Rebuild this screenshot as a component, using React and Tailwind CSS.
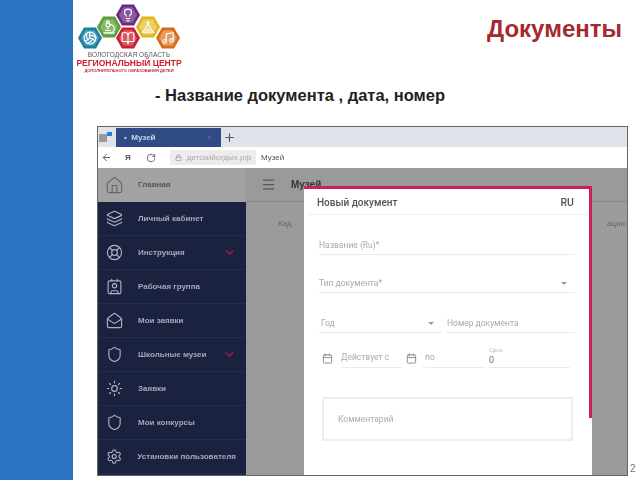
import React from 'react';
import { House, Layers, LifeBuoy, Contact, MailOpen, Shield, Sun, Settings, Calendar, ChevronDown, RotateCw, Lock, Plus, X, ArrowLeft, Menu, Volleyball, Microscope, Lightbulb, BookOpen, Tent, Music, Pencil } from 'lucide-react';

const hexes = [
  { cx: 20, cy: 27, fill: '#1f7f9c', I: Volleyball, inner: '#4aa3bf' },
  { cx: 39, cy: 16, fill: '#5f9e3c', I: Microscope, inner: '#86b867' },
  { cx: 58, cy: 12, fill: '#6a2c82', I: Lightbulb, inner: '#8c5aa0' },
  { cx: 58, cy: 27, fill: '#c8202e', I: BookOpen, inner: '#d95a60' },
  { cx: 78, cy: 16, fill: '#e0b81e', I: Tent, inner: '#ecd066' },
  { cx: 98, cy: 27, fill: '#d96a1c', I: Music, inner: '#e79a60' },
];

function hexPoints(cx, cy, r) {
  const h = r * 0.866;
  return `${cx - r},${cy} ${cx - r / 2},${cy - h} ${cx + r / 2},${cy - h} ${cx + r},${cy} ${cx + r / 2},${cy + h} ${cx - r / 2},${cy + h}`;
}

function LogoHexes() {
  const pos = [
    { cx: 12, cy: 34 }, { cx: 31, cy: 23 }, { cx: 50, cy: 11 },
    { cx: 50, cy: 34 }, { cx: 70, cy: 23 }, { cx: 90, cy: 34 },
  ];
  return (
    <svg width="102" height="46" viewBox="0 0 102 46" className="block">
      {hexes.map((h, i) => {
        const { cx, cy } = pos[i];
        const I = h.I;
        return (
          <g key={i}>
            <polygon points={hexPoints(cx, cy, 12)} fill={h.fill} />
            <polygon points={hexPoints(cx, cy, 9)} fill={h.inner} />
            <I x={cx - 7} y={cy - 7} width={14} height={14} color="#ffffff" strokeWidth={2} />
          </g>
        );
      })}
    </svg>
  );
}

const items = [
  { t: 'Личный кабинет', I: Layers },
  { t: 'Инструкция', I: LifeBuoy, c: true },
  { t: 'Рабочая группа', I: Contact },
  { t: 'Мои заявки', I: MailOpen },
  { t: 'Школьные музеи', I: Shield, c: true },
  { t: 'Заявки', I: Sun },
  { t: 'Мои конкурсы', I: Shield },
  { t: 'Установки пользователя', I: Settings },
];

function Field({ label, className = '', arrow = false }) {
  return (
    <div className={`flex items-center justify-between border-b border-[#ececec] text-[8.5px] text-[#a9a9a9] ${className}`}>
      <span>{label}</span>
      {arrow && <span className="mr-2 h-0 w-0 border-x-[3px] border-t-[3px] border-x-transparent border-t-[#999]" />}
    </div>
  );
}

export default function App() {
  return (
    <div className="flex h-[480px] w-[640px] overflow-hidden bg-white font-['Liberation_Sans',sans-serif]">
      <div className="h-full w-[73px] shrink-0 bg-[#2b74c1]" />
      <div className="flex min-w-0 flex-1 flex-col">
        <div className="flex h-[76px] items-start justify-between pr-[18px]">
          <div className="ml-[5px] mt-[4px] flex w-[102px] flex-col items-center blur-[0.4px]">
            <LogoHexes />
            <div className="mt-[1px] whitespace-nowrap text-[6.5px] leading-[7px] tracking-[0.1px] text-[#555]">ВОЛОГОДСКАЯ ОБЛАСТЬ</div>
            <div className="whitespace-nowrap text-[8.5px] font-bold leading-[10px] text-[#d2202f]">РЕГИОНАЛЬНЫЙ ЦЕНТР</div>
            <div className="whitespace-nowrap text-[4px] font-bold leading-[6px] text-[#c0303a]">ДОПОЛНИТЕЛЬНОГО ОБРАЗОВАНИЯ ДЕТЕЙ</div>
          </div>
          <h1 className="mt-[14px] text-[24px] font-bold leading-[30px] text-[#a52a2e]">Документы</h1>
        </div>
        <div className="ml-[82px] mt-[9px] h-[41px] text-[16.5px] font-bold leading-[20px] text-[#222]">- Название документа , дата, номер</div>
        <div className="flex min-h-0 items-end">
          <div className="ml-[24px] flex h-[350px] w-[531px] shrink-0 flex-col overflow-hidden border-[1.5px] border-[#666] blur-[0.5px]">
            <div className="flex h-[20px] shrink-0 items-end bg-[#dfe3ea] pl-[1px]">
              <div className="flex h-[19px] w-[17px] items-center"><div className="h-[8px] w-[8px] bg-[#999]" /><div className="h-[4px] w-[5px] self-start mt-[4px] bg-[#2a7de1]" /></div>
              <div className="flex h-[19px] w-[105px] items-center justify-between bg-[#2f4a85] px-[8px] text-[8px] font-bold text-[#cfd6e8]">
                <span>•&nbsp;&nbsp;Музей</span>
                <X size={7} color="#7d8cb0" />
              </div>
              <Plus size={13} color="#555" className="mb-[3px] ml-[2px]" />
            </div>
            <div className="flex h-[21px] shrink-0 items-center bg-white pl-[3px] text-[8px] text-[#555]">
              <ArrowLeft size={11} color="#555" />
              <span className="ml-[13px] font-bold">Я</span>
              <RotateCw size={10} color="#555" className="ml-[15px]" />
              <div className="ml-[14px] flex h-[15px] items-center gap-[5px] bg-[#ececec] px-[5px] text-[#aaa]">
                <Lock size={7} color="#888" />
                <span>детскийотдых.рф</span>
              </div>
              <span className="ml-[5px]">Музей</span>
            </div>
            <div className="relative flex min-h-0 flex-1 bg-[#9b9b9b]">
              <div className="flex w-[148px] shrink-0 flex-col bg-[#1b2240]">
                <div className="flex h-[34px] shrink-0 items-center gap-[14px] bg-[#a2a2a2] pl-[7px] text-[8px] font-bold text-[#555]">
                  <House size={19} color="#666" strokeWidth={1.4} />
                  <span>Главная</span>
                </div>
                {items.map(({ t, I, c }) => (
                  <div key={t} className="flex h-[34px] shrink-0 items-center border-b border-[#252c4c] pl-[8px] pr-[10px] text-[8px] font-bold text-[#a4a8ba]">
                    <I size={17} color="#aeb2c2" strokeWidth={1.6} />
                    <span className="ml-[15px] flex-1 whitespace-nowrap">{t}</span>
                    {c && <ChevronDown size={13} color="#8e1f48" strokeWidth={3} />}
                  </div>
                ))}
              </div>
              <div className="min-w-0 flex-1">
                <div className="flex h-[34px] items-center border-b border-[#888] bg-[#9a9a9a] pl-[15px] text-[10px] font-bold text-[#333]">
                  <Menu size={15} color="#555" />
                  <span className="ml-[15px]">Музей</span>
                </div>
                <div className="flex justify-between px-[32px] pt-[16px] pr-[2px] text-[8px] text-[#666]">
                  <span>Кад</span>
                  <span>ации</span>
                </div>
              </div>
              <div className="absolute bottom-0 left-[206px] top-[18px] w-[288px] overflow-hidden bg-white font-['Roboto',sans-serif]">
                <div className="absolute right-0 top-0 h-[232px] w-[3px] bg-[#cc1f5c]" />
                <div className="absolute left-0 right-0 top-0 h-[3px] bg-[#cc1f5c]" />
                <div className="mx-[3px] flex h-[26px] translate-y-[3px] items-center justify-between border-b border-[#f0f0f0] pl-[10px] pr-[15px] pt-[2px] text-[10px] font-medium text-[#555]">
                  <span>Новый документ</span>
                  <span className="text-[10.5px]">RU</span>
                </div>
                <div className="px-[15px] pt-[24px]">
                  <Field label="Название (Ru)*" className="h-[19px] w-[256px]" />
                  <Field label="Тип документа*" arrow className="mt-[19px] h-[19px] w-[256px]" />
                  <div className="mt-[21px] flex gap-[5px]">
                    <Field label="Год" arrow className="h-[19px] w-[123px] pl-[2px]" />
                    <Field label="Номер документа" className="h-[19px] w-[128px]" />
                  </div>
                  <div className="mt-[13px] flex items-end text-[8.5px] text-[#a9a9a9]">
                    <Calendar size={11} color="#888" className="mb-[4px] ml-[3px]" />
                    <Field label="Действует с" className="ml-[8px] h-[20px] w-[60px]" />
                    <Calendar size={11} color="#888" className="mb-[4px] ml-[5px]" />
                    <Field label="по" className="ml-[8px] h-[20px] w-[60px]" />
                    <div className="ml-[4px] flex w-[81px] flex-col border-b border-[#ececec]">
                      <span className="text-[6px] leading-[8px] text-[#bbb]">Срок</span>
                      <span className="h-[13px] text-[9px] leading-[12px] text-[#777]">0</span>
                    </div>
                  </div>
                  <div className="mt-[29px] flex h-[44px] w-[251px] items-center border-2 border-[#eeeeee] pl-[14px] text-[8.5px] text-[#aaa] ml-[3px]">Комментарий</div>
                </div>
              </div>
            </div>
          </div>
          <span className="mb-[1px] ml-[2px] text-[10px] leading-[12px] text-[#777]">2</span>
        </div>
      </div>
    </div>
  );
}
